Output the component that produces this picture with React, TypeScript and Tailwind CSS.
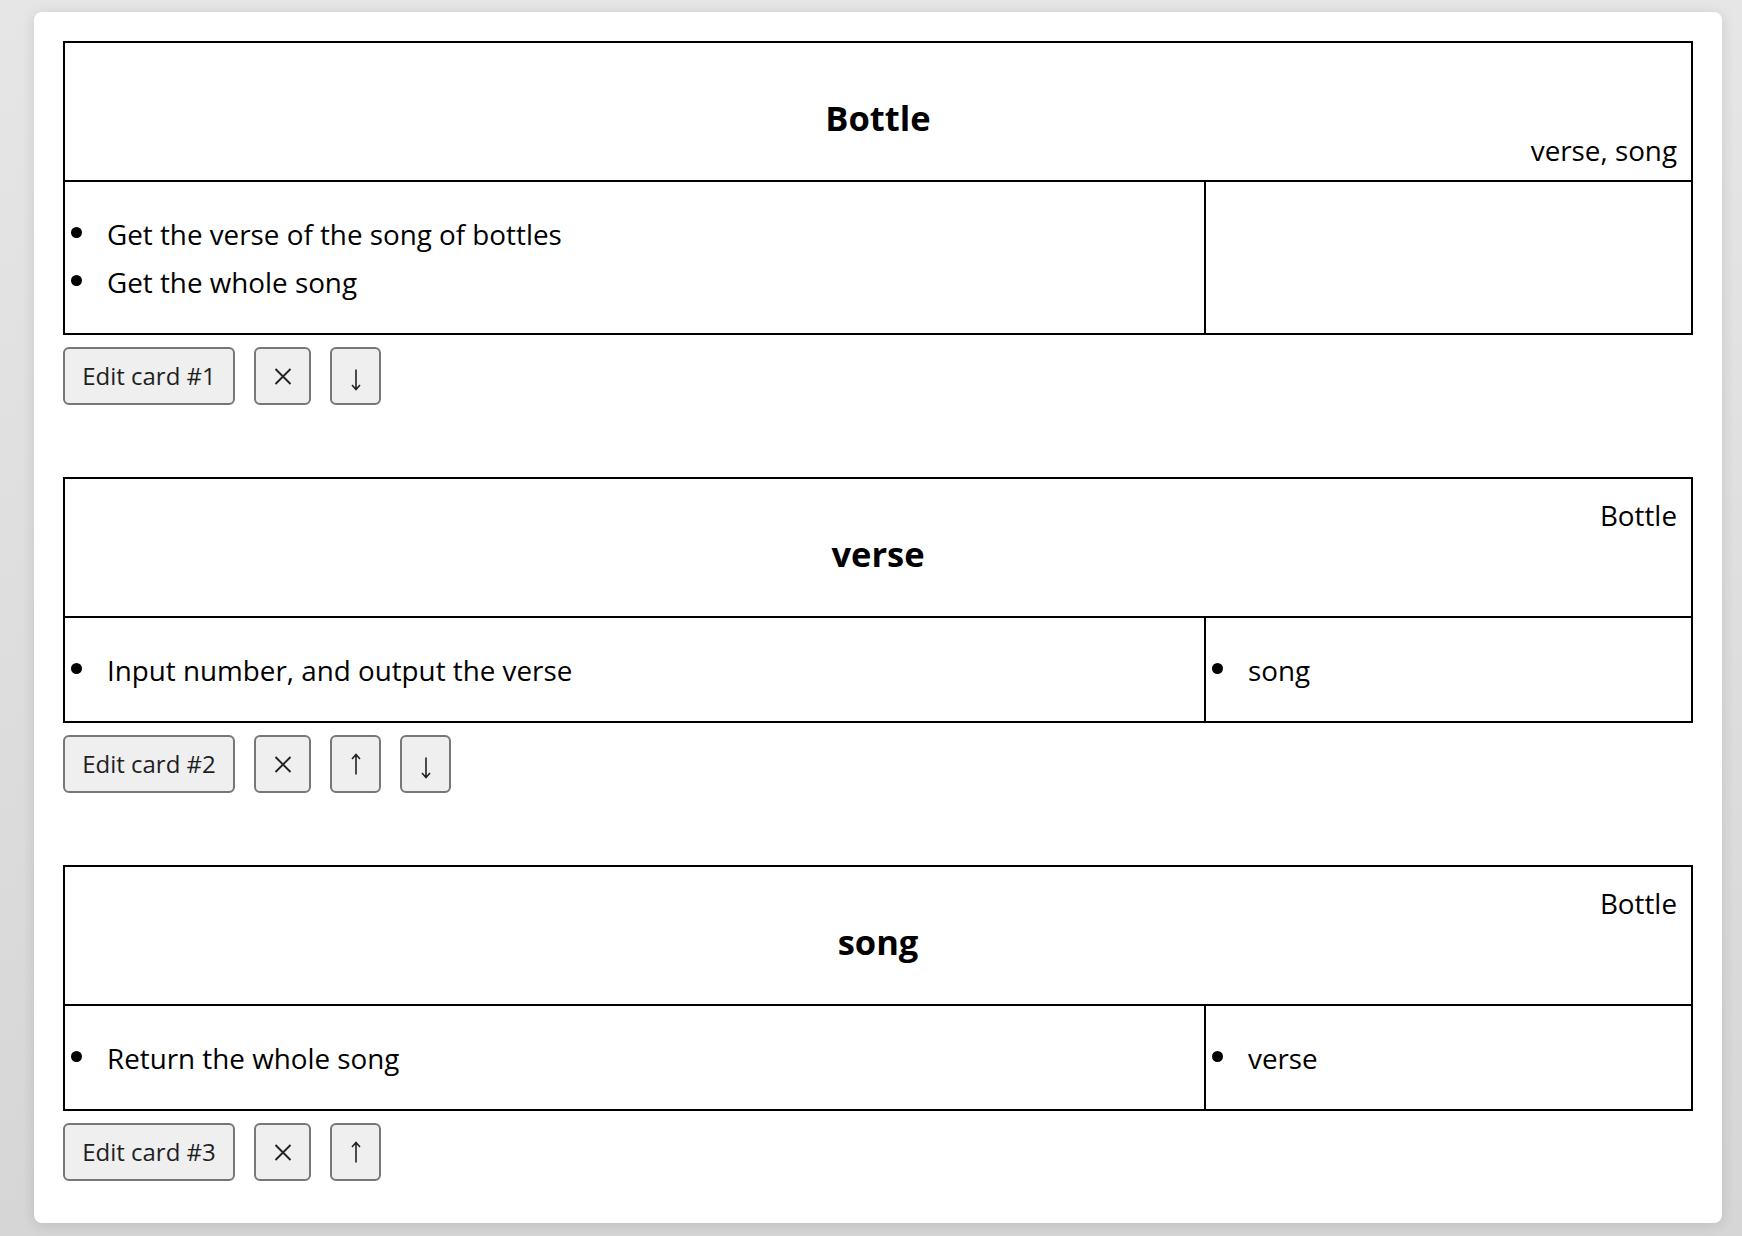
import React from "react";

interface CardData {
  title: string;
  parent: string;
  children: string;
  tasks: string[];
  refs: string[];
}

const cards: CardData[] = [
  {
    title: "Bottle",
    parent: "",
    children: "verse, song",
    tasks: ["Get the verse of the song of bottles", "Get the whole song"],
    refs: [],
  },
  {
    title: "verse",
    parent: "Bottle",
    children: "",
    tasks: ["Input number, and output the verse"],
    refs: ["song"],
  },
  {
    title: "song",
    parent: "Bottle",
    children: "",
    tasks: ["Return the whole song"],
    refs: ["verse"],
  },
];

const XIcon = () => (
  <svg width="18" height="17" viewBox="0 0 18 17" fill="none" stroke="#222" strokeWidth="1.9" strokeLinecap="butt">
    <path d="M1.5 1 L16.5 16 M16.5 1 L1.5 16" />
  </svg>
);

const UpIcon = () => (
  <svg width="10" height="22" viewBox="0 0 10 22" fill="none" stroke="#222" strokeWidth="1.6">
    <path d="M5 1.5 V21.5 M1 6 L5 1.5 L9 6" />
  </svg>
);

const DownIcon = () => (
  <svg width="10" height="22" viewBox="0 0 10 22" fill="none" stroke="#222" strokeWidth="1.6" className="mt-[8px]">
    <path d="M5 0.5 V20.5 M1 16 L5 20.5 L9 16" />
  </svg>
);

const btn =
  "h-[58px] flex items-center justify-center rounded-[6px] border-2 border-[#777777] bg-[#efefef] text-[#1f1f1f]";

// one column of the card body: bulleted list
const BulletList: React.FC<{ items: string[] }> = ({ items }) => {
  if (items.length === 0) return null;
  return (
    <ul className="my-[27.5px]">
      {items.map((item) => (
        <li key={item} className="flex leading-[48px]">
          <span className="mt-[17.5px] ml-[6px] w-[11px] h-[11px] rounded-full bg-black shrink-0" />
          <span className="ml-[25px]">{item}</span>
        </li>
      ))}
    </ul>
  );
};

const Card: React.FC<{ card: CardData; index: number; total: number }> = ({ card, index, total }) => (
  <section>
    <div className="border-2 border-black">
      <div className="border-b-2 border-black pt-[16px] pb-[10px]">
        <div className="h-[40px] leading-[40px] text-right pr-[14px]">{card.parent}</div>
        <h3 className="text-[34.5px] font-bold leading-[38px] text-center">{card.title}</h3>
        <div className="h-[40px] -mt-[7px] leading-[40px] text-right pr-[14px]">{card.children}</div>
      </div>
      <div className="flex">
        <div className="w-[1141px] border-r-2 border-black">
          <BulletList items={card.tasks} />
        </div>
        <div className="flex-1">
          <BulletList items={card.refs} />
        </div>
      </div>
    </div>
    <div className="flex gap-[19px] mt-[12px] text-[24px]">
      <button className={`${btn} w-[172px]`}>Edit card #{index + 1}</button>
      <button className={`${btn} w-[57px]`} aria-label="Delete">
        <XIcon />
      </button>
      {index > 0 && (
        <button className={`${btn} w-[51px]`} aria-label="Move up">
          <UpIcon />
        </button>
      )}
      {index < total - 1 && (
        <button className={`${btn} w-[51px]`} aria-label="Move down">
          <DownIcon />
        </button>
      )}
    </div>
  </section>
);

export default function App() {
  return (
    <div className="min-h-screen bg-gradient-to-b from-[#e6e6e6] to-[#d6d6d6] pt-[12px] pb-[13px] font-['Open_Sans',sans-serif] text-[27.8px] text-black">
      <div className="ml-[34px] w-[1688px] bg-white rounded-[8px] shadow-[0_2px_14px_rgba(0,0,0,0.12)] px-[29px] pt-[29px] pb-[42px] flex flex-col gap-[72px]">
        {cards.map((card, i) => (
          <Card key={card.title} card={card} index={i} total={cards.length} />
        ))}
      </div>
    </div>
  );
}
